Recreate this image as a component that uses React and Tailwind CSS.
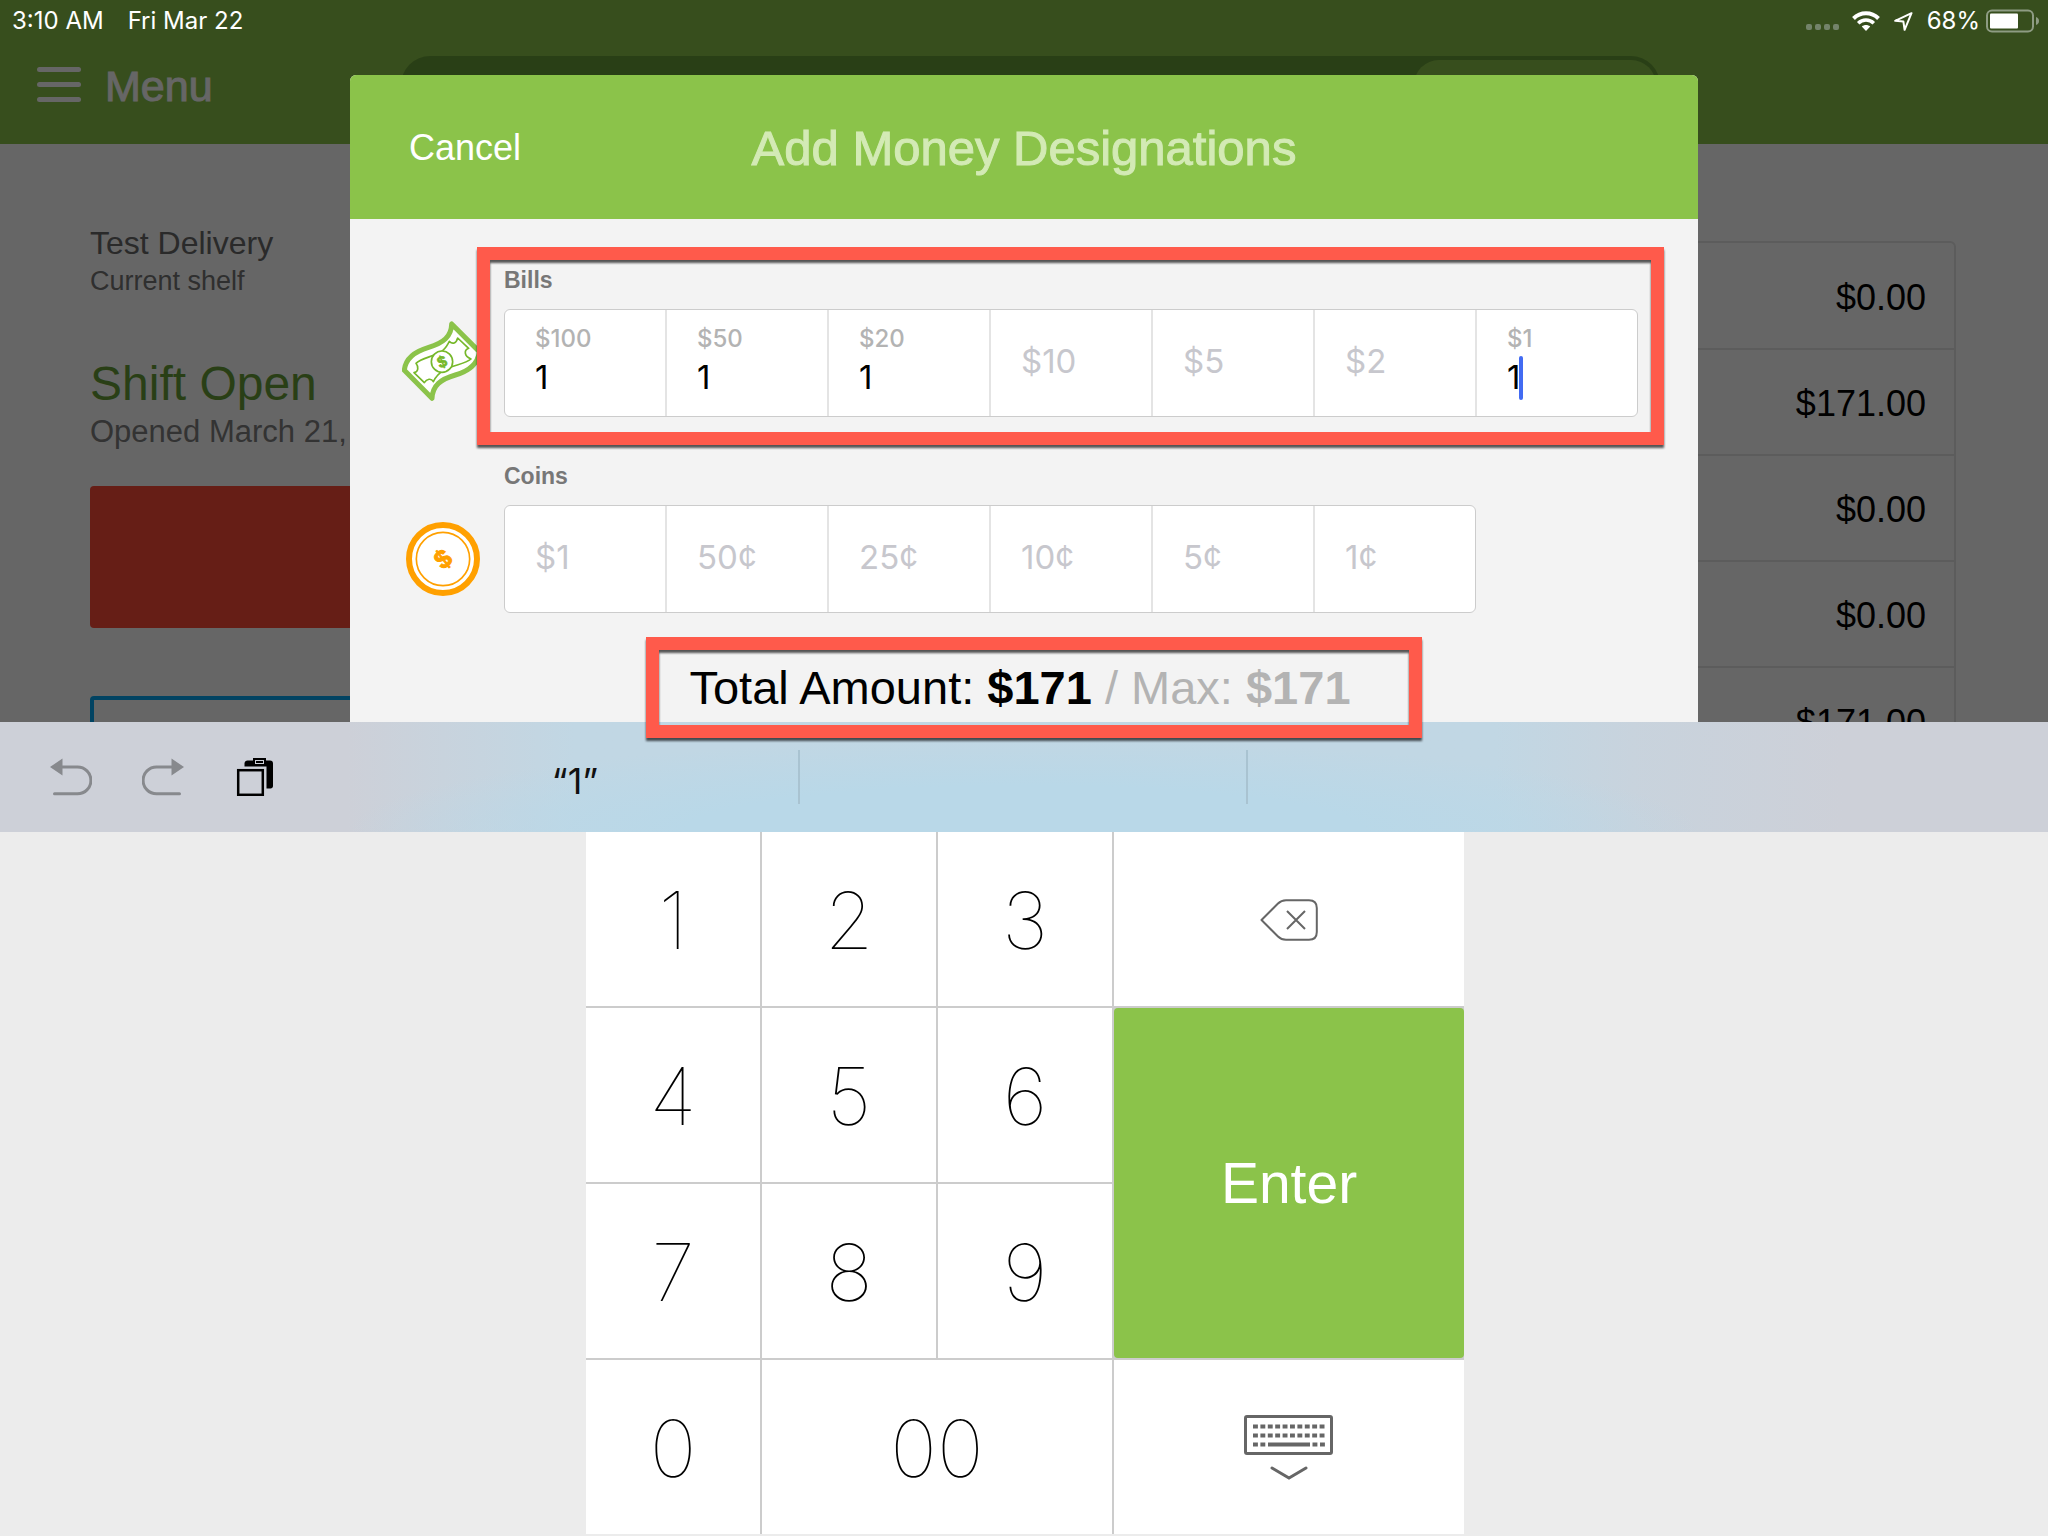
/**
 * Money Designations Page
 * Shift overview with the "Add Money Designations" modal and numeric keypad
 */

import React, { useState } from 'react';

const SHIFT_AMOUNTS = ['$0.00', '$171.00', '$0.00', '$0.00', '$171.00'];

const BILLS = [
    { id: 'bill-100', label: '$100', value: '1' },
    { id: 'bill-50', label: '$50', value: '1' },
    { id: 'bill-20', label: '$20', value: '1' },
    { id: 'bill-10', label: '$10', value: '' },
    { id: 'bill-5', label: '$5', value: '' },
    { id: 'bill-2', label: '$2', value: '' },
    { id: 'bill-1', label: '$1', value: '1', active: true }
];

const COINS = [
    { id: 'coin-100', label: '$1', value: '' },
    { id: 'coin-50', label: '50¢', value: '' },
    { id: 'coin-25', label: '25¢', value: '' },
    { id: 'coin-10', label: '10¢', value: '' },
    { id: 'coin-5', label: '5¢', value: '' },
    { id: 'coin-1', label: '1¢', value: '' }
];

const StatusBar = () => (
    <div className="absolute inset-x-0 top-0 z-20 flex h-[42px] items-center justify-between pl-3 pr-2 font-['Inter',sans-serif] text-2xl leading-[42px] text-white">
        <div className="flex gap-6">
            <span>3:10 AM</span>
            <span>Fri Mar 22</span>
        </div>
        <div className="flex items-center">
            {/* Cellular dots */}
            <svg className="mr-3 h-[34px] w-[34px]" viewBox="0 0 34 34" fill="#73836a">
                <rect x="0" y="20" width="6" height="6" rx="2" />
                <rect x="9" y="20" width="6" height="6" rx="2" />
                <rect x="18" y="20" width="6" height="6" rx="2" />
                <rect x="27" y="20" width="6" height="6" rx="2" />
            </svg>
            {/* Wifi */}
            <svg className="mr-3.5 h-5 w-7" viewBox="0 0 28 20" fill="none" stroke="white" strokeWidth="4">
                <path d="M1.5 7.5C8.5 0.6 19.5 0.6 26.5 7.5" />
                <path d="M6.2 12.2c4.4-4.2 11.2-4.2 15.6 0" strokeWidth="3.6" />
                <path d="M14 20l-4.2-4.4c2.4-2 6-2 8.4 0z" fill="white" stroke="none" />
            </svg>
            {/* Location arrow */}
            <svg className="mr-3.5 h-[19px] w-[19px]" viewBox="0 0 19 19" fill="none" stroke="white" strokeWidth="2" strokeLinejoin="round">
                <path d="M17.5 1.2L1.2 8.8l8.2 0.8L10.6 17.8z" />
            </svg>
            <span className="mr-1.5">68%</span>
            {/* Battery */}
            <svg className="h-6 w-[54px]" viewBox="0 0 54 24">
                <rect x="1" y="1.5" width="46" height="21" rx="5" fill="none" stroke="#8e9c83" strokeWidth="2" />
                <rect x="4" y="4.5" width="28" height="15" rx="1" fill="white" />
                <path d="M50 8c2.4 0.8 3 2.4 3 4s-0.6 3.2-3 4z" fill="#8e9c83" />
            </svg>
        </div>
    </div>
);

const ShiftPage = () => (
    <div className="absolute inset-0 overflow-hidden bg-white">
        <header className="h-36 bg-[#8bc34a] pt-10">
            <div className="flex h-[90px] items-center pl-[37px] pr-[388px]">
                <button type="button" className="flex items-center gap-6 text-[43px] leading-none text-white [-webkit-text-stroke:1px]">
                    <svg className="h-9 w-11" viewBox="0 0 44 36" fill="white" stroke="none">
                        <rect x="0" y="0" width="44" height="5" rx="2.5" />
                        <rect x="0" y="15" width="44" height="5" rx="2.5" />
                        <rect x="0" y="30" width="44" height="5" rx="2.5" />
                    </svg>
                    <span className="pt-0.5">Menu</span>
                </button>
                <div className="ml-[188px] flex h-[58px] flex-1 justify-end rounded-full bg-[#689f38] p-1">
                    <div className="w-[242px] rounded-full bg-[#8bc34a]" />
                </div>
            </div>
        </header>

        <div className="grid grid-cols-2 gap-20 pl-[90px] pr-[92px]">
            <section className="pt-[79px]">
                <p className="text-[32px] leading-10 text-[#696969]">Test Delivery</p>
                <p className="text-[27px] leading-9 text-[#757575]">Current shelf</p>
                <h2 className="mt-14 text-5xl leading-[58px] text-[#689f38]">Shift Open</h2>
                <p className="text-[31px] leading-[38px] text-[#808080]">Opened March 21,</p>
                <button type="button" aria-label="Close shift" className="mt-[35px] block h-[142px] w-full rounded bg-[#ff4b37]" />
                <button type="button" aria-label="Add money" className="mt-[68px] block h-[142px] w-full rounded border-4 border-[#03a9f4]" />
            </section>

            <section className="pt-[97px]">
                <div className="rounded-md border-2 border-[#e5e5e5]">
                    <table className="w-full text-right text-4xl text-black">
                        <tbody className="divide-y-2 divide-[#e5e5e5]">
                            {SHIFT_AMOUNTS.map((amount, index) => (
                                <tr key={index} className="h-[106px]">
                                    <td className="pr-7 pt-1">{amount}</td>
                                </tr>
                            ))}
                        </tbody>
                    </table>
                </div>
            </section>
        </div>
    </div>
);

const BillIcon = () => (
    <svg className="h-[84px] w-[78px]" viewBox="36 33 234 252" fill="white" strokeLinejoin="round">
        <path
            d="M185 42C184 80 160 99 116 112C72 125 46 146 43 181L126 265C128 226 152 208 196 195C240 182 264 160 268 125Z"
            stroke="#8bc34a"
            strokeWidth="15"
        />
        <path
            d="M78 160C92 145 128 140 150 127C168 117 172 104 178 94C188 104 199 100 203 84L236 115C222 120 221 138 243 147C226 162 190 165 164 179C146 189 136 202 130 215C124 204 110 206 103 218L72 188C86 186 86 170 78 160Z"
            stroke="#76b82a"
            strokeWidth="5"
        />
        <circle cx="156" cy="155" r="32" stroke="#76b82a" strokeWidth="5" />
        <text x="156" y="172" textAnchor="middle" fontSize="48" fontWeight="700" fill="#76b82a" stroke="#76b82a" strokeWidth="2" transform="rotate(-22 156 155)">$</text>
    </svg>
);

const CoinIcon = () => (
    <svg className="h-[74px] w-[74px]" viewBox="0 0 222 222">
        <circle cx="111" cy="111" r="102" fill="white" stroke="#ffa000" strokeWidth="18" />
        <circle cx="111" cy="111" r="80" fill="none" stroke="#ffa000" strokeWidth="5" />
        <text x="111" y="138" textAnchor="middle" fontSize="78" fontWeight="700" fill="#ffa000" stroke="#ffa000" strokeWidth="3" strokeLinejoin="round" transform="rotate(-38 111 111)">$</text>
    </svg>
);

const AmountField = ({ field, value, onChange }) => {
    const filled = value !== '';

    return (
        <div className="relative flex min-w-0 flex-1 flex-col justify-center gap-1 pl-[30px] font-['Inter',sans-serif]">
            {filled && (
                <label htmlFor={field.id} className="text-2xl leading-6 font-medium text-[#b3b3b3]">{field.label}</label>
            )}
            <input
                id={field.id}
                type="text"
                inputMode="numeric"
                aria-label={filled ? undefined : field.label}
                placeholder={field.label}
                value={value}
                onChange={(e) => onChange(field.id, e.target.value)}
                className={`h-11 w-full bg-transparent text-[33px] leading-[44px] text-black outline-none placeholder:text-[#c7c7cd] ${filled ? '' : 'mb-1'}`}
            />
            {field.active && <span className="absolute bottom-4 left-[42px] h-11 w-1 rounded-full bg-[#426bf2]" />}
        </div>
    );
};

const Highlight = ({ className }) => (
    <div className={`pointer-events-none absolute border-[13px] border-[#ff5a4b] drop-shadow-[0_3px_1px_rgba(0,0,0,0.65)] ${className}`} />
);

const AmountGroup = ({ title, icon, fields, values, onChange, rowClass, children }) => (
    <div className="flex items-end gap-6">
        <div className="flex h-[108px] w-[78px] shrink-0 items-center justify-end">{icon}</div>
        <div className="relative flex-1">
            <h3 className="mb-[15px] text-[23px] leading-7 font-bold text-[#777777]">{title}</h3>
            <div className={`flex h-[108px] divide-x-2 divide-[#e4e4e4] rounded-md border border-[#cccccc] bg-white ${rowClass}`}>
                {fields.map((field) => (
                    <AmountField key={field.id} field={field} value={values[field.id]} onChange={onChange} />
                ))}
            </div>
            {children}
        </div>
    </div>
);

const DesignationsModal = ({ values, onChange }) => (
    <div role="dialog" aria-labelledby="modal-title" className="flex w-[1348px] flex-col rounded-t-md bg-[#f3f3f3]">
        <div className="grid h-36 grid-cols-[1fr_auto_1fr] items-center rounded-t-md bg-[#8bc34a] px-[59px] pt-0.5">
            <button type="button" className="justify-self-start text-4xl text-white">Cancel</button>
            <h1 id="modal-title" className="text-[49px] leading-[56px] text-[#d3eab5] [-webkit-text-stroke:1px]">Add Money Designations</h1>
        </div>

        <div className="flex flex-col gap-[45px] pl-[52px] pr-[60px] pt-[47px]">
            <AmountGroup title="Bills" icon={<BillIcon />} fields={BILLS} values={values} onChange={onChange} rowClass="w-full">
                <Highlight className="-top-[19px] -right-[26px] -bottom-7 -left-[27px]" />
            </AmountGroup>
            <AmountGroup title="Coins" icon={<CoinIcon />} fields={COINS} values={values} onChange={onChange} rowClass="w-6/7" />

            <p className="relative mx-auto w-fit text-[47px] leading-[60px] whitespace-nowrap text-black">
                Total Amount: <strong>$171</strong>
                <span className="text-[#b3b3b3]"> / Max: <strong>$171</strong></span>
                <Highlight className="-top-[21px] -right-[71px] -bottom-5 -left-[43px]" />
            </p>
        </div>
    </div>
);

const KeyboardToolbar = () => (
    <div className="bg-linear-to-r from-[#cdd0d8] from-17% via-[#c1d7e4] via-28% to-[#c1d7e4]">
        <div className="bg-linear-to-l from-[#cdd0d8] from-10% via-[#cdd0d8]/60 via-20% to-transparent to-27%">
            <div className="grid h-[110px] grid-cols-[1fr_1344px_1fr] items-center bg-[radial-gradient(ellipse_33%_85%_at_50%_100%,#b9d8e8_50%,transparent)]">
                <div className="flex items-center gap-[50px] pl-[50px]">
                    <button type="button" aria-label="Undo">
                        <svg className="h-[38px] w-[42px]" viewBox="0 0 42 38" fill="none" stroke="#87898d" strokeWidth="3" strokeLinecap="round">
                            <path d="M12 9h15.500a13.400 13.400 0 0 1 0 26.800H4.500" />
                            <path d="M0 9L12.500 0.500V17.500Z" fill="#87898d" stroke="none" />
                        </svg>
                    </button>
                    <button type="button" aria-label="Redo">
                        <svg className="h-[38px] w-[42px]" viewBox="0 0 42 38" fill="none" stroke="#87898d" strokeWidth="3" strokeLinecap="round">
                            <path d="M30 9H14.500a13.400 13.400 0 0 0 0 26.800H37.500" />
                            <path d="M42 9L29.500 0.500V17.500Z" fill="#87898d" stroke="none" />
                        </svg>
                    </button>
                    <button type="button" aria-label="Paste">
                        <svg className="h-[38px] w-[42px]" viewBox="0 0 42 38">
                            <path d="M10.500 8.500V5.500C10.500 3.500 12 2.500 13.500 2.500H36C38 2.500 39 3.500 39 5.500V28C39 29.500 38 30.500 36.500 30.500H32.500V8.500Z" />
                            <rect x="19" y="0" width="13" height="7" />
                            <rect x="21.500" y="2.500" width="8" height="3" fill="none" stroke="#cdd0d8" strokeWidth="1" />
                            <rect x="4.200" y="12.200" width="24.600" height="24.600" fill="#cdd0d8" stroke="black" strokeWidth="2.500" />
                        </svg>
                    </button>
                </div>
                <div className="grid h-[54px] grid-cols-3 divide-x-2 divide-[#a9c3d1]">
                    <button type="button" className="pt-2 font-['Inter',sans-serif] text-4xl leading-none text-[#111111]">“1”</button>
                    <span />
                    <span />
                </div>
            </div>
        </div>
    </div>
);

const Key = ({ className = '', children, ...props }) => (
    <button type="button" className={`flex items-center justify-center bg-white pt-0.5 ${className}`} {...props}>
        {children}
    </button>
);

const Keypad = () => (
    <div className="flex justify-center bg-[#ececec] pb-0.5 pl-0.5">
        <div className="grid grid-cols-[174px_174px_174px_350px] auto-rows-[174px] gap-0.5 bg-[#cccccc] font-['Inter',sans-serif] text-[79px] font-thin text-black">
            <Key>1</Key>
            <Key>2</Key>
            <Key>3</Key>
            <Key aria-label="Delete">
                <svg className="h-[42px] w-[58px]" viewBox="0 0 58 42" fill="none" stroke="#666666" strokeWidth="2">
                    <path d="M1.500 21L18 4.500C20.500 2 22.500 1.200 26 1.200H49C54.500 1.200 56.800 4 56.800 9V33C56.800 38 54.500 40.800 49 40.800H26C22.500 40.800 20.500 40 18 37.500Z" strokeLinejoin="round" />
                    <path d="M27 12l18 18M45 12L27 30" />
                </svg>
            </Key>
            <Key>4</Key>
            <Key>5</Key>
            <Key>6</Key>
            <button type="button" className="row-span-2 rounded bg-[#8bc34a] pt-0.5 font-['Liberation_Sans',Arial,sans-serif] text-[57px] font-normal text-white">
                Enter
            </button>
            <Key>7</Key>
            <Key>8</Key>
            <Key>9</Key>
            <Key>0</Key>
            <Key className="col-span-2">00</Key>
            <Key aria-label="Hide keyboard">
                <svg className="h-[66px] w-[90px]" viewBox="0 0 90 66" fill="none" stroke="#666666">
                    <rect x="1.500" y="1.500" width="86" height="37" rx="1.500" strokeWidth="3" />
                    <path d="M9 11.500H82M9 20.500H82" strokeWidth="4" strokeDasharray="4.900 2.500" />
                    <path d="M9 29.500h4.900M16.400 29.500h4.900M24 29.500h42M68.500 29.500h4.900M76 29.500h4.900" strokeWidth="4" />
                    <path d="M28 53L45 63L62 53" strokeWidth="3" strokeLinecap="round" />
                </svg>
            </Key>
        </div>
    </div>
);

const App = () => {
    const [values, setValues] = useState(
        Object.fromEntries([...BILLS, ...COINS].map((field) => [field.id, field.value]))
    );

    const handleChange = (id, value) => {
        setValues((prev) => ({ ...prev, [id]: value }));
    };

    return (
        <div className="flex h-screen flex-col overflow-hidden font-['Liberation_Sans',Arial,sans-serif]">
            <main className="relative z-10 flex min-h-0 flex-1 justify-center pt-[75px]">
                <ShiftPage />
                <div className="absolute inset-0 bg-black/60" />
                <StatusBar />
                <div className="relative flex">
                    <DesignationsModal values={values} onChange={handleChange} />
                </div>
            </main>

            <div className="shrink-0">
                <KeyboardToolbar />
                <Keypad />
            </div>
        </div>
    );
};

export default App;
